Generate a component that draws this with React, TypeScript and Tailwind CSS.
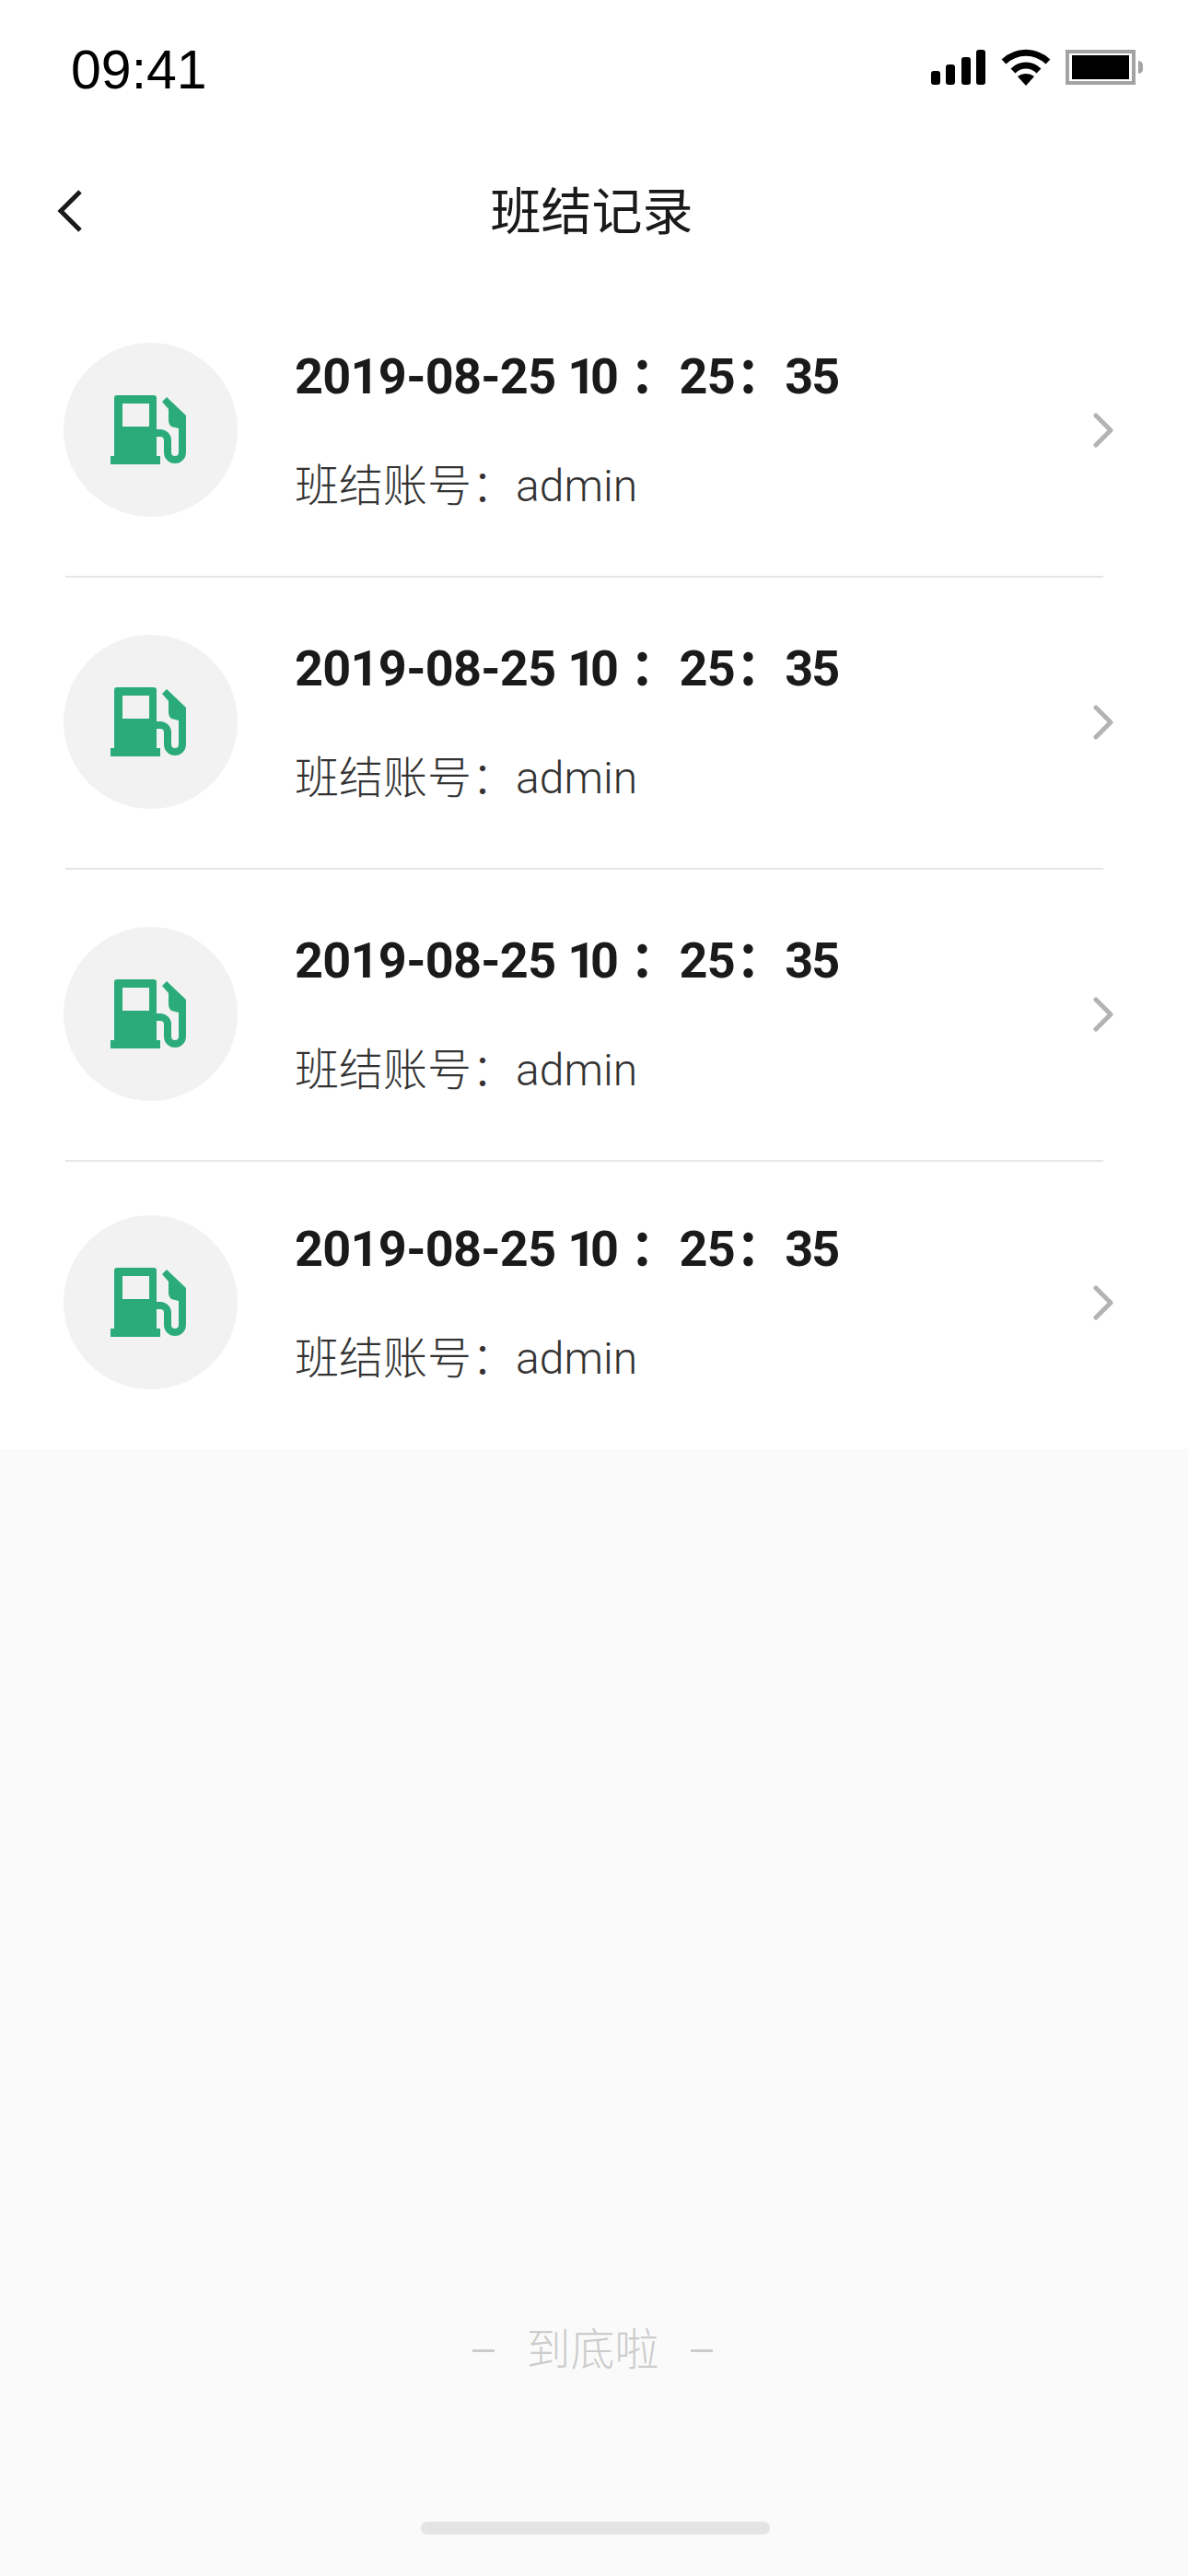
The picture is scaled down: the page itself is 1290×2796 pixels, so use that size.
const ROWS = [
  { id: 1, last: false },
  { id: 2, last: false },
  { id: 3, last: false },
  { id: 4, last: true },
];

function StatusIcons() {
  return (
    <div className="flex items-center">
      <svg width="60" height="38" viewBox="0 0 60 38" fill="#000">
        <rect x="0" y="23" width="10" height="15" rx="3" />
        <rect x="16" y="16" width="10" height="22" rx="3" />
        <rect x="33" y="8" width="10" height="30" rx="3" />
        <rect x="49" y="0" width="10" height="38" rx="3" />
      </svg>
      <svg className="ml-[16px]" width="54" height="40" viewBox="0 0 54 40" fill="none">
        <path d="M3 14C17 1 37 1 51 14" stroke="#000" strokeWidth="7" />
        <path d="M13 24C21 16 33 16 41 24" stroke="#000" strokeWidth="7" />
        <path d="M18 30C23 26 31 26 36 30L27 40Z" fill="#000" />
      </svg>
      <div className="ml-[16px] flex h-[38px] w-[76px] items-center justify-center border-4 border-[#a3a3a3] bg-white">
        <div className="h-[26px] w-[62px] bg-black" />
      </div>
      <div className="ml-[3px] h-[14px] w-[5px] rounded-r-full bg-[#a3a3a3]" />
    </div>
  );
}

function PumpIcon() {
  return (
    <svg className="mr-[3px]" width="84" height="76" viewBox="0 0 84 76" fill="none">
      <path
        fillRule="evenodd"
        clipRule="evenodd"
        fill="#2bab7a"
        d="M4 3C4 1 5 0 7 0H47C49 0 50 1 50 3V66H54V75H0V66H4V3ZM13 9V34H42V9H13Z"
      />
      <path d="M48 41H54A8 8 0 0 1 62 49V62A8 8 0 0 0 78 62V28" stroke="#2bab7a" strokeWidth="8" />
      <path d="M56 7L61 2L82 22V36H74L66 34C64 32 63 30 63 27V15Z" fill="#2bab7a" />
    </svg>
  );
}

function RecordRow({ last }: { last: boolean }) {
  return (
    <div className={last ? 'relative flex h-[312px] items-center pb-[7px]' : 'relative flex h-[317px] items-center border-b-2 border-[#e6e6e6] pb-[2px]'}>
      <div className="ml-[-2px] flex h-[189px] w-[189px] shrink-0 items-center justify-center rounded-full bg-[#f2f2f2]">
        <PumpIcon />
      </div>
      <div className="ml-[62px] flex-1">
        <p className="text-[54px] leading-[62px] font-bold tracking-[-0.7px] text-[#1a1a1a]">
          2019-08-25 <span className="tracking-[-6px]">10</span>
          <span className="ml-[18px]">：</span>25<span className="ml-[1px]">：</span>
          <span className="tracking-[-2px]">35</span>
        </p>
        <p className="mt-[60px] text-[48px] leading-[56px] font-light text-[#333]">
          班结账号：admin
        </p>
      </div>
      <svg className="absolute right-[-11px]" width="22" height="38" viewBox="0 0 22 38" fill="none">
        <path d="M3 3L19 19L3 35" stroke="#b3b3b3" strokeWidth="5" strokeLinecap="round" strokeLinejoin="round" />
      </svg>
    </div>
  );
}

export default function App() {
  return (
    <div className="flex h-[2796px] w-[1290px] flex-col bg-[#fafafa] font-['Roboto','Noto_Sans_CJK_SC',sans-serif]">
      <div className="bg-white">
        <div className="flex h-[150px] items-start justify-between pt-[46px] pr-[49px] pl-[77px]">
          <span className="font-['Liberation_Sans',sans-serif] text-[59px] leading-[60px] text-black">09:41</span>
          <div className="pt-[7px]">
            <StatusIcons />
          </div>
        </div>
        <div className="relative flex h-[160px] items-start justify-center">
          <svg className="absolute top-[55px] left-[61px]" width="30" height="48" viewBox="0 0 30 48" fill="none">
            <path d="M26 3L5 24L26 45" stroke="#1a1a1a" strokeWidth="5" />
          </svg>
          <h1 className="pt-[48px] pr-[5px] text-[55px] leading-[64px] font-normal text-[#1a1a1a]">班结记录</h1>
        </div>
        <div className="pr-[92px] pl-[71px]">
          {ROWS.map((r) => (
            <RecordRow key={r.id} last={r.last} />
          ))}
        </div>
      </div>
      <div className="relative flex flex-1 flex-col items-center">
        <div className="mt-[950px] mr-[3px] flex items-center text-[#cccccc]">
          <span className="h-[3px] w-[24px] bg-[#cccccc]" />
          <span className="mx-[34px] text-[48px] leading-[56px] font-light">到底啦</span>
          <span className="h-[3px] w-[24px] bg-[#cccccc]" />
        </div>
        <div className="mt-[158px] ml-[3px] h-[14px] w-[379px] rounded-full bg-[#e4e4e4]" />
      </div>
    </div>
  );
}
